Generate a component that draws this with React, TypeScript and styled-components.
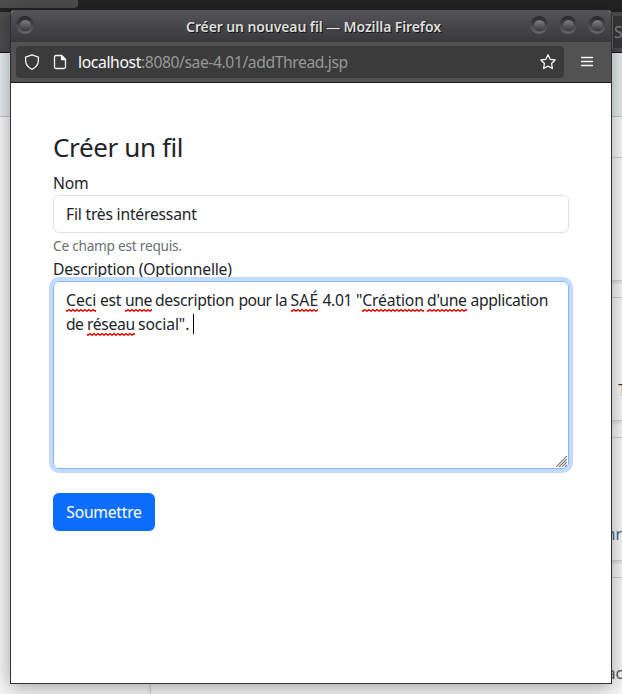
import React from "react";
import styled, { createGlobalStyle } from "styled-components";

const GlobalStyle = createGlobalStyle`
  * { box-sizing: border-box; }
  body {
    margin: 0;
    overflow: hidden;
    font-family: "Noto Sans", sans-serif;
    font-size: 15.7px;
    line-height: 24px;
    color: #212529;
  }
`;

const Desktop = styled.main`
  position: relative;
  width: 622px;
  height: 694px;
  overflow: hidden;
  background: #f6f6f6;
`;

const TabStrip = styled.div`
  height: 12px;
  background: #222;
`;

const ActiveTab = styled.div`
  width: 78px;
  height: 8px;
  background: #4d4d4d;
  border-radius: 0 0 4px 0;
`;

const BackToolbar = styled.div`
  display: flex;
  justify-content: flex-end;
  height: 41px;
  padding: 4px 0;
  background: #4c4c4c;
  border-bottom: 1px solid #1d1718;
`;

const BackUrlField = styled.div`
  width: 10px;
  height: 32px;
  padding-left: 1px;
  border-left: 1px solid #666;
  background: #383838;
  color: #858585;
  line-height: 33px;
  white-space: nowrap;
`;

const BackNavbar = styled.div`
  height: 64px;
  background: #e4e9ea;
  border-bottom: 1px solid #c2c6ca;
`;

const CardList = styled.div`
  display: flex;
  flex-direction: column;
  gap: 16px;
  padding: 40px 0 0 150px;
`;

const BackCard = styled.div`
  display: flex;
  justify-content: flex-end;
  align-items: flex-end;
  height: 124px;
  border: 1px solid #d2d2d2;
  border-right: 0;
  background: #f6f6f6;
  box-shadow: 0 2px 4px rgba(0, 0, 0, 0.13);
`;

const CardText = styled.span<{ $tone: string; $bottom: number; $shift?: number }>`
  margin-bottom: ${(p) => p.$bottom}px;
  margin-right: ${(p) => p.$shift ?? 0}px;
  color: ${(p) => p.$tone};
`;

const Window = styled.section`
  position: absolute;
  left: 10px;
  top: 10px;
  width: 602px;
  height: 674px;
  display: flex;
  flex-direction: column;
  border: 1px solid #2e3032;
  border-top-color: #515153;
  border-radius: 4px 4px 0 0;
  overflow: hidden;
  background: #fff;
`;

const WindowShadow = styled.div`
  position: absolute;
  left: 10px;
  top: 10px;
  width: 602px;
  height: 674px;
  box-shadow: 0 3px 18px rgba(0, 0, 0, 0.34);
`;

const TitleBar = styled.header`
  display: grid;
  grid-template-columns: 97px 1fr 92px;
  height: 31px;
  flex: none;
  background: linear-gradient(#545456, #39393b);
`;

const ButtonGroup = styled.div<{ $end?: boolean }>`
  display: flex;
  gap: 11px;
  padding: 5px 5px 0;
  justify-content: ${(p) => (p.$end ? "flex-end" : "flex-start")};
`;

const RoundButton = styled.i`
  width: 18px;
  height: 18px;
  border-radius: 50%;
  background: linear-gradient(#262628, #6a6a6c);
  display: grid;
  place-items: center;
  &::before {
    content: "";
    width: 11px;
    height: 11px;
    border-radius: 50%;
    background: linear-gradient(#808082, #38383a);
    box-shadow: 0 0 1px #252527;
  }
`;

const Title = styled.h1`
  margin: 0;
  text-align: center;
  font-size: 14px;
  font-weight: 600;
  line-height: 31px;
  white-space: nowrap;
  color: #dededc;
  text-shadow: 1px 1px 0 #161616;
  letter-spacing: -0.1px;
`;

const Toolbar = styled.div`
  display: flex;
  height: 41px;
  flex: none;
  padding: 4px 5px;
  background: #525252;
  border-bottom: 1px solid #1d1d1d;
`;

const UrlField = styled.div`
  display: flex;
  align-items: center;
  width: 548px;
  height: 32px;
  padding: 0 8px;
  border-radius: 4px;
  background: #3b3b3b;
  color: #fbfbfe;
`;

const UrlText = styled.span`
  flex: 1;
  margin-left: 10px;
  color: #989899;
  white-space: nowrap;
  line-height: 32px;
  letter-spacing: -0.42px;
  b { font-weight: 400; color: #fbfbfe; letter-spacing: -0.36px; }
`;

const Icon = styled.svg<{ $gap?: number }>`
  width: 16px;
  height: 16px;
  flex: none;
  margin-left: ${(p) => p.$gap ?? 0}px;
  fill: none;
  stroke: #f4f4f6;
  stroke-width: 1.3;
  stroke-linejoin: round;
  stroke-linecap: round;
`;

const MenuButton = styled.div`
  display: grid;
  place-items: center;
  width: 16px;
  margin-left: 15px;
`;

const Form = styled.form`
  display: flex;
  flex-direction: column;
  padding: 48px 42px 0;
  letter-spacing: -0.22px;
`;

const Heading = styled.h2`
  margin: 0 0 8px;
  font-size: 26px;
  font-weight: 400;
  line-height: 32px;
  letter-spacing: -0.38px;
`;

const Label = styled.label`
  line-height: 24px;
  white-space: nowrap;
`;

const Input = styled.div`
  height: 38px;
  padding: 6px 12px;
  border: 1px solid #dee2e6;
  border-radius: 6px;
`;

const Hint = styled.div`
  margin: 2px 0 1px;
  height: 21px;
  font-size: 13.7px;
  line-height: 21px;
  letter-spacing: -0.26px;
  color: #6c7075;
`;

const TextArea = styled.div`
  position: relative;
  height: 188px;
  padding: 6px 12px;
  border: 1px solid #86b7fe;
  border-radius: 6px;
  box-shadow: 0 0 0 4px #c2dbff;
  white-space: nowrap;
`;

const wave =
  "data:image/svg+xml,%3Csvg xmlns='http://www.w3.org/2000/svg' width='4' height='3'%3E%3Cpath d='M-1 .5 L1 2.3 L3 .5 L5 2.3' fill='none' stroke='%23f00000' stroke-width='1.3'/%3E%3C/svg%3E";

const TextLine = styled.div`
  display: flex;
  height: 24px;
  white-space: pre;
`;

const Word = styled.span<{ $advance: number; $track?: number }>`
  flex: none;
  width: ${(p) => p.$advance}px;
  letter-spacing: ${(p) => p.$track ?? -0.25}px;
`;

const Misspelt = styled.span`
  position: relative;
  &::after {
    content: "";
    position: absolute;
    left: 0;
    right: 0;
    bottom: -1px;
    height: 3px;
    background: url("${wave}") repeat-x;
  }
`;

const Caret = styled.span`
  width: 1px;
  height: 20px;
  margin-top: 2px;
  background: #000;
`;

const Grip = styled.svg`
  position: absolute;
  right: 1px;
  bottom: 1px;
  width: 11px;
  height: 11px;
  stroke: #777;
  stroke-width: 1.1;
`;

const Submit = styled.button`
  width: 102px;
  height: 38px;
  margin-top: 24px;
  padding: 0;
  border: 0;
  border-radius: 6px;
  background: #0d6efd;
  color: #fff;
  font: inherit;
  letter-spacing: -0.25px;
`;

export default function App() {
  return (
    <>
      <GlobalStyle />
      <Desktop>
        <TabStrip><ActiveTab /></TabStrip>
        <BackToolbar><BackUrlField>S</BackUrlField></BackToolbar>
        <BackNavbar />
        <CardList>
          <BackCard />
          <BackCard><CardText $tone="#333" $bottom={18} $shift={-5}>T</CardText></BackCard>
          <BackCard><CardText $tone="#46618d" $bottom={14}>hr</CardText></BackCard>
          <BackCard><CardText $tone="#555" $bottom={15} $shift={-1}>ac</CardText></BackCard>
        </CardList>
        <WindowShadow />
        <Window>
          <TitleBar>
            <ButtonGroup><RoundButton /></ButtonGroup>
            <Title>Créer un nouveau fil — Mozilla Firefox</Title>
            <ButtonGroup $end><RoundButton /><RoundButton /><RoundButton /></ButtonGroup>
          </TitleBar>
          <Toolbar>
            <UrlField>
              <Icon viewBox="0 0 16 16">
                <path d="M8 .8 14.4 3.2V6.8Q14.2 12.4 8 15.3Q1.8 12.4 1.6 6.8V3.2Z" />
              </Icon>
              <Icon $gap={12} viewBox="0 0 16 16">
                <path d="M9.5 1.5H4Q2.5 1.5 2.5 3V13Q2.5 14.5 4 14.5H12Q13.5 14.5 13.5 13V5.5Z" />
                <path d="M9.5 1.5V5.5H13.5Z" fill="#f4f4f6" />
              </Icon>
              <UrlText><b>localhost</b>:8080/sae-4.01/addThread.jsp</UrlText>
              <Icon viewBox="0 0 16 16">
                <path d="M8 .8 10.2 5.3 15.1 6 11.6 9.5 12.4 14.5 8 12.2 3.6 14.5 4.4 9.5 .9 6 5.8 5.3Z" />
              </Icon>
            </UrlField>
            <MenuButton>
              <Icon viewBox="0 0 16 16"><path d="M2.5 3.5H13.5M2.5 7.5H13.5M2.5 11.5H13.5" /></Icon>
            </MenuButton>
          </Toolbar>
          <Form>
            <Heading>Créer un fil</Heading>
            <Label>Nom</Label>
            <Input>Fil très intéressant</Input>
            <Hint>Ce champ est requis.</Hint>
            <Label>Description (Optionnelle)</Label>
            <TextArea>
              <TextLine>
                <Word $advance={34} $track={0}><Misspelt>Ceci</Misspelt> </Word>
                <Word $advance={25}>est </Word>
                <Word $advance={30} $track={-0.5}><Misspelt>une</Misspelt> </Word>
                <Word $advance={83.5} $track={-0.32}>description </Word>
                <Word $advance={36.5} $track={-0.6}>pour </Word>
                <Word $advance={15.5} $track={-0.4}>la </Word>
                <Word $advance={32} $track={0.15}><Misspelt>SAÉ</Misspelt> </Word>
                <Word $advance={33.5} $track={-0.4}>4.01 </Word>
                <Word $advance={71} $track={-0.15}>"<Misspelt>Création</Misspelt> </Word>
                <Word $advance={43.5} $track={-0.25}><Misspelt>d'une</Misspelt> </Word>
                <Word $advance={80} $track={-0.35}>application</Word>
              </TextLine>
              <TextLine>
                <Word $advance={21} $track={-0.6}>de </Word>
                <Word $advance={51} $track={-0.35}><Misspelt>réseau</Misspelt> </Word>
                <Word $advance={55} $track={-0.1}>social". </Word>
                <Caret />
              </TextLine>
              <Grip viewBox="0 0 11 11">
                <path d="M0 11 11 0M3 11 11 3M6 11 11 6M9 11 11 9" />
              </Grip>
            </TextArea>
            <div><Submit type="button">Soumettre</Submit></div>
          </Form>
        </Window>
      </Desktop>
    </>
  );
}
